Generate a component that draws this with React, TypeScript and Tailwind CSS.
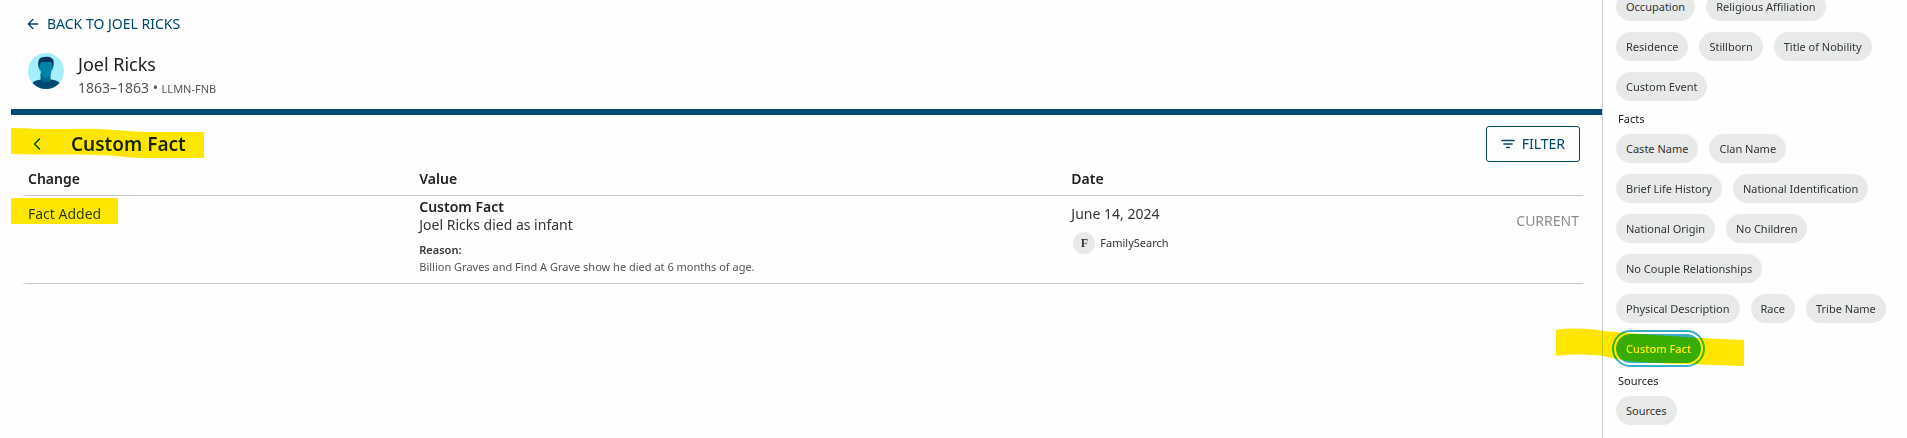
import { ArrowLeft, ChevronLeft } from 'lucide-react';
import clsx from 'clsx';

const events = [
  'Occupation',
  'Religious Affiliation',
  'Residence',
  'Stillborn',
  'Title of Nobility',
  'Custom Event',
];

const facts = [
  'Caste Name',
  'Clan Name',
  'Brief Life History',
  'National Identification',
  'National Origin',
  'No Children',
  'No Couple Relationships',
  'Physical Description',
  'Race',
  'Tribe Name',
  'Custom Fact',
];

const sources = ['Sources'];

function Avatar() {
  return (
    <svg viewBox="0 0 36 36" className="mt-[2px] size-9 shrink-0" aria-hidden="true">
      <clipPath id="avatar-clip">
        <circle cx="18" cy="18" r="18" />
      </clipPath>
      <g clipPath="url(#avatar-clip)">
        <rect width="36" height="36" fill="#a5effc" />
        <path d="M2 36c0-6 4-8.500 11-9.500h10c7 1 11 3.500 11 9.500z" fill="#004a73" />
        <path d="M12.500 20h10v6.500c-1 3.200-9 3.200-10 0z" fill="#006a8c" />
        <path d="M10.600 15C9.500 8 10.500 4.200 16 4c5-.6 10.300.8 9.600 6 0 2-.1 3.500-.6 5z" fill="#00375a" />
        <path
          d="M11.800 11.500c.6-2 2-2.600 4-2.400 3 .3 5 .1 7-.1 1 .7 1.300 1.700 1.400 3l.8 2.500c0 1.500-.6 2.600-1.500 2.900-.6 4-2.500 7.600-5.500 7.600s-5-3.600-5.500-7.600c-1-.3-1.600-1.600-1.600-3z"
          fill="#0083a8"
        />
      </g>
    </svg>
  );
}

function FilterIcon() {
  return (
    <svg viewBox="0 0 14 10" className="h-[10px] w-[14px]" aria-hidden="true">
      <path d="M1 1.500h12M3 5h8M5.800 8.500h2.400" stroke="currentColor" strokeWidth="1.600" strokeLinecap="round" />
    </svg>
  );
}

/* Yellow marker stroke laid over the content */
function Marker({ width, height, d, className }: { width: number; height: number; d: string; className: string }) {
  return (
    <svg
      width={width}
      height={height}
      viewBox={`0 0 ${width} ${height}`}
      className={clsx('pointer-events-none absolute max-w-none mix-blend-darken', className)}
      aria-hidden="true"
    >
      <path d={d} fill="#ffe600" />
    </svg>
  );
}

function Chips({ items, selected }: { items: string[]; selected?: string }) {
  return (
    <div className="flex flex-wrap gap-[11px]">
      {items.map((item) => (
        <div key={item} className="relative">
          <button
            type="button"
            className={clsx(
              'block h-[29px] rounded-full px-[10px] text-[11px] leading-[29px]',
              item === selected
                ? 'bg-[#38acc9] font-medium text-white outline-2 outline-offset-2 outline-[#38acc9]'
                : 'bg-[#e8eaea] text-[#333536]'
            )}
          >
            {item}
          </button>
          {item === selected && (
            <Marker
              width={188}
              height={38}
              className="-top-[6px] -left-[60px]"
              d="M0 2C12 0 30 0 47 3L84 6L144 10L188 12V38C160 37 140 36 120 36L84 34C70 33 60 31 47 28C30 26 14 26 0 28z"
            />
          )}
        </div>
      ))}
    </div>
  );
}

export default function App() {
  return (
    <div className="flex min-h-screen bg-[#fefefe] pl-[11px] font-['Noto_Sans',sans-serif] text-sm leading-5 text-[#333536]">
      <main className="min-w-0 flex-1">
        <header className="border-b-6 border-[#004a73] px-[17px] pt-[14px] pb-[10px]">
          <a href="#" className="flex w-fit items-center gap-[6px] text-[#00466d]">
            <ArrowLeft className="-ml-[3px] size-4" strokeWidth={2} />
            BACK TO JOEL RICKS
          </a>
          <div className="mt-[17px] flex items-start gap-[14px]">
            <Avatar />
            <div>
              <h1 className="text-lg leading-[27px] text-[#202121]">Joel Ricks</h1>
              <p className="text-[#535556]">
                1863–1863 • <span className="text-[11px]">LLMN-FNB</span>
              </p>
            </div>
          </div>
        </header>

        <div className="relative flex items-center justify-between pt-[11px] pr-[22px] pl-4">
          <div className="flex items-center gap-6">
            <button type="button" aria-label="Back" className="text-[#004a73]">
              <ChevronLeft className="size-5" strokeWidth={2} />
            </button>
            <h2 className="text-[19px] font-semibold text-[#202121]">Custom Fact</h2>
          </div>
          <button
            type="button"
            className="flex h-9 items-center gap-[7px] rounded-[3px] border border-[#00466d] px-[14px] text-[#00466d]"
          >
            <FilterIcon />
            FILTER
          </button>
          <Marker
            width={193}
            height={31}
            className="top-[13px] left-0"
            d="M0 0C14 0 22 1 36 1C60 1 84 0 104 2C118 3 126 4 140 4H193V30H130C116 30 104 27 86 27C60 26 30 27 0 26z"
          />
        </div>

        <div className="pr-4 pl-[10px]">
          <table className="w-full table-fixed text-left">
            <thead>
              <tr className="bg-[linear-gradient(to_right,transparent,#c5c7c8_6px,#c5c7c8_calc(100%-6px),transparent)] bg-[length:100%_1px] bg-bottom bg-no-repeat text-[#202121]">
                <th className="w-1/4 px-[7px] pt-[7px] pb-[7px] font-semibold">Change</th>
                <th className="w-5/12 px-[7px] font-semibold">Value</th>
                <th className="px-[7px] font-semibold">Date</th>
                <th className="w-[10%]" />
              </tr>
            </thead>
            <tbody>
              <tr className="bg-[linear-gradient(to_right,transparent,#c5c7c8_6px,#c5c7c8_calc(100%-6px),transparent)] bg-[length:100%_1px] bg-bottom bg-no-repeat align-top">
                <td className="relative px-[7px] pt-2">
                  Fact Added
                  <Marker width={107} height={26} className="top-[2px] -left-[10px]" d="M0 0H107V26H0z" />
                </td>
                <td className="px-[7px] pt-[2px] pb-[9px]">
                  <h3 className="leading-[18px] font-semibold text-[#202121]">Custom Fact</h3>
                  <p className="leading-[18px]">Joel Ricks died as infant</p>
                  <h4 className="mt-[7px] text-[11px] leading-[17px] font-semibold">Reason:</h4>
                  <p className="text-[11px] leading-[17px] text-[#535556]">
                    Billion Graves and Find A Grave show he died at 6 months of age.
                  </p>
                </td>
                <td className="px-[7px] pt-2">
                  <p>June 14, 2024</p>
                  <div className="mt-2 flex items-center gap-[5px] pl-[2px] text-[11px]">
                    <span className="size-[22px] rounded-full bg-[#e8eaea] text-center font-['Liberation_Serif',serif] text-xs leading-[22px] font-bold">
                      F
                    </span>
                    FamilySearch
                  </div>
                </td>
                <td className="px-[7px] pt-[15px] text-right text-[#8b8d8e]">CURRENT</td>
              </tr>
            </tbody>
          </table>
        </div>
      </main>

      <aside className="-mt-2 w-[305px] shrink-0 border-l border-[#c5c7c8] pr-[14px] pl-[13px] text-[11px]">
        <Chips items={events} />
        <h3 className="mt-2 mb-[5px] pl-[2px] text-[#202121]">Facts</h3>
        <Chips items={facts} selected="Custom Fact" />
        <h3 className="mt-2 mb-[5px] pl-[2px] text-[#202121]">Sources</h3>
        <Chips items={sources} />
      </aside>
    </div>
  );
}
